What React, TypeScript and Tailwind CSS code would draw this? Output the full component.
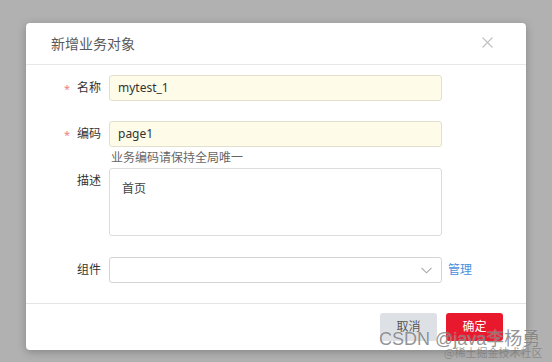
import React from "react";

const font = { fontFamily: '"Noto Sans", "Noto Sans CJK SC", sans-serif' };

function Label({ text, required }: { text: string; required?: boolean }) {
  return (
    <div className="w-[75px] shrink-0 flex justify-end items-center h-[26px] text-[12px] text-[#333]">
      {required && <span className="text-[#f08080] text-[11px] mr-[7px] leading-none">*</span>}
      <span>{text}</span>
    </div>
  );
}

export default function App() {
  return (
    <div className="relative w-[552px] h-[362px] bg-[#b1b1b1] overflow-hidden pt-[23px] pl-[26px]" style={font}>
      <div className="w-[500px] h-[327px] bg-white rounded-[4px] shadow-[0_2px_8px_rgba(0,0,0,0.25)] flex flex-col">
        {/* header */}
        <div className="h-[42px] flex items-center justify-between pl-[25px] pr-[33px] border-b border-[#e8e8e8] shrink-0">
          <span className="text-[14px] text-[#5a5a5a]">新增业务对象</span>
          <svg width="11" height="11" viewBox="0 0 11 11" className="mt-[-3px]">
            <path d="M0.5 0.5 L10.5 10.5 M10.5 0.5 L0.5 10.5" stroke="#c0c0c0" strokeWidth="1.1" />
          </svg>
        </div>
        {/* body */}
        <div className="flex-1 flex flex-col pt-[10px]">
          <div className="flex gap-[8px]">
            <Label text="名称" required />
            <div className="w-[333px] h-[26px] rounded-[3px] border border-[#e2dfcf] bg-[#fefbe8] flex items-center px-[8px] text-[12px] text-[#333]">
              mytest_1
            </div>
          </div>
          <div className="flex gap-[8px] mt-[20px]">
            <Label text="编码" required />
            <div className="w-[333px] h-[26px] rounded-[3px] border border-[#e2dfcf] bg-[#fefbe8] flex items-center px-[8px] text-[12px] text-[#333]">
              page1
            </div>
          </div>
          <div className="flex gap-[8px]">
            <div className="w-[75px] shrink-0" />
            <div className="h-[21px] leading-[21px] text-[12px] text-[#666] pl-[2px]">业务编码请保持全局唯一</div>
          </div>
          <div className="flex gap-[8px]">
            <Label text="描述" />
            <div className="w-[333px] h-[68px] rounded-[3px] border border-[#dcdcdc] bg-white px-[12px] pt-[10px] text-[12px] leading-[20px] text-[#444]">
              首页
            </div>
          </div>
          <div className="flex gap-[8px] mt-[21px] items-center">
            <Label text="组件" />
            <div className="w-[333px] h-[26px] rounded-[3px] border border-[#d4d4d4] bg-white flex items-center justify-end pr-[9px]">
              <svg width="11" height="7" viewBox="0 0 11 7">
                <path d="M0.5 0.8 L5.5 5.8 L10.5 0.8" fill="none" stroke="#a8a8a8" strokeWidth="1.1" />
              </svg>
            </div>
            <span className="text-[12px] text-[#4a8fe0] ml-[-2px]">管理</span>
          </div>
        </div>
        {/* footer */}
        <div className="h-[47px] shrink-0 border-t border-[#e4e4e4] flex justify-end items-start pt-[9px] pr-[23px] gap-[9px]">
          <div className="w-[57px] h-[28px] rounded-[3px] bg-[#dde1e6] text-[#555] text-[12px] flex items-center justify-center">取消</div>
          <div className="w-[57px] h-[28px] rounded-[3px] bg-[#e8192c] text-white text-[12px] flex items-center justify-center">确定</div>
        </div>
      </div>
      {/* watermark */}
      <div
        className="absolute left-[379px] top-[328px] text-[18px] leading-[22px] text-[rgba(100,100,100,0.7)] whitespace-nowrap"
        style={{ fontFamily: '"Liberation Sans", "Noto Sans CJK SC", sans-serif', textShadow: "0 0 1px rgba(255,255,255,0.6)" }}
      >
        CSDN @java李杨勇
      </div>
      <div
        className="absolute left-[444px] top-[346px] text-[11px] leading-[13px] text-[rgba(120,120,120,0.7)] whitespace-nowrap"
        style={{ fontFamily: '"Noto Sans CJK SC", sans-serif' }}
      >
        @稀土掘金技术社区
      </div>
    </div>
  );
}
